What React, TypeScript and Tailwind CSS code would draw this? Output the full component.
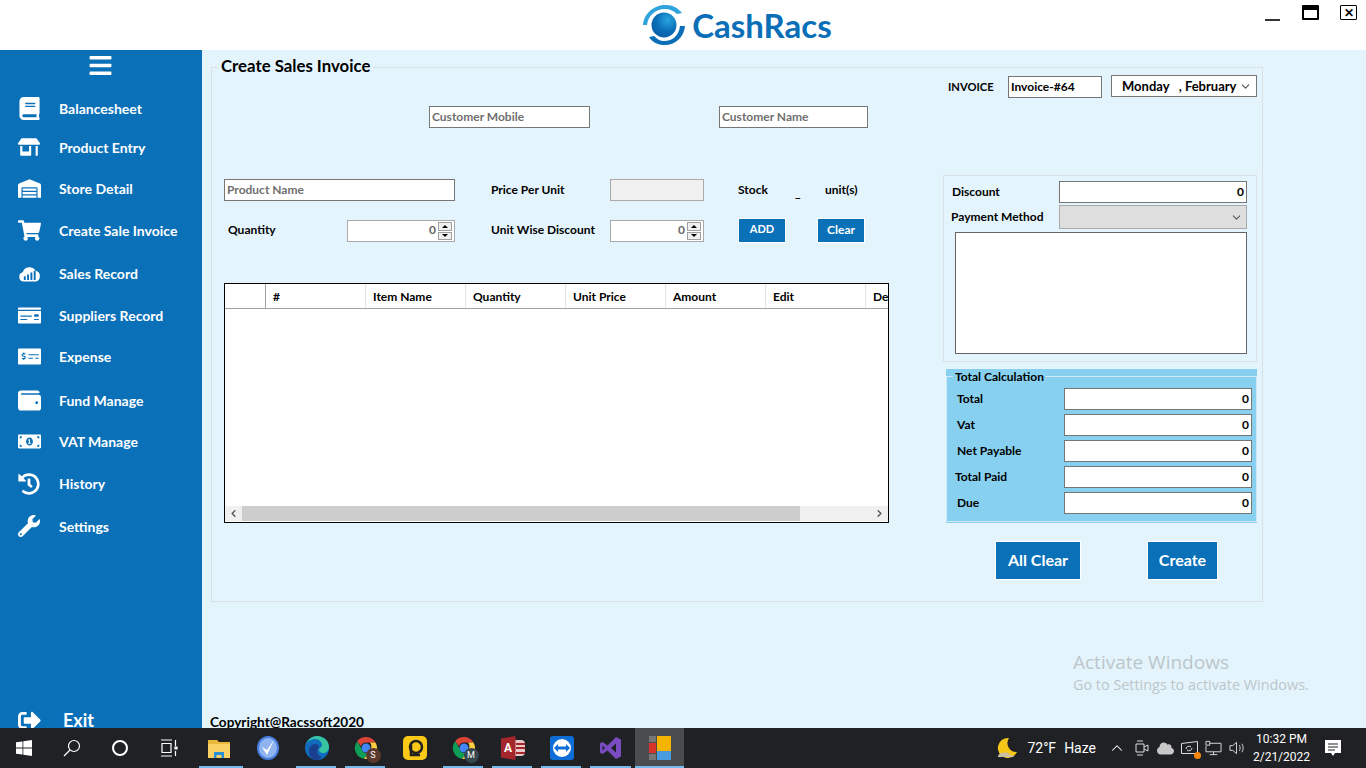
import React from 'react';
import {
  FaBars, FaBook, FaStoreAlt, FaWarehouse, FaShoppingCart, FaMoneyCheck, FaMoneyCheckAlt,
  FaWallet, FaMoneyBillAlt, FaHistory, FaWrench, FaSignOutAlt, FaCloud,
} from 'react-icons/fa';
import { ChevronUp, ChevronDown, ChevronLeft, ChevronRight } from 'lucide-react';

const SalesCloud = () => (
  <svg viewBox="0 0 24 18" className="w-[23px] h-[17px]">
    <path d="M6 17.5a5 5 0 0 1-1.2-9.8A7.5 7.5 0 0 1 18.5 6.2 5.8 5.8 0 0 1 18.5 17.5Z" fill="#fff" />
    <path d="M6 12h2v4H6zM9.500 10h2v6h-2zM13 8h2v8h-2zM16.500 6h2v10h-2z" fill="#0a70b8" />
  </svg>
);

const navItems = [
  { label: 'Balancesheet', icon: <FaBook size={23} />, h: 'h-[39px]' },
  { label: 'Product Entry', icon: <FaStoreAlt size={22} />, h: 'h-[40px] pb-[2px]' },
  { label: 'Store Detail', icon: <FaWarehouse size={23} />, h: 'h-[42px] pb-[2px]' },
  { label: 'Create Sale Invoice', icon: <FaShoppingCart size={23} />, h: 'h-[43px] pb-[2px]' },
  { label: 'Sales Record', icon: <SalesCloud />, h: 'h-[42px] pb-[2px]' },
  { label: 'Suppliers Record', icon: <FaMoneyCheck size={23} />, h: 'h-[41px]' },
  { label: 'Expense', icon: <FaMoneyCheckAlt size={23} />, h: 'h-[44px] pb-[4px]' },
  { label: 'Fund Manage', icon: <FaWallet size={23} />, h: 'h-[41px]' },
  { label: 'VAT Manage', icon: <FaMoneyBillAlt size={23} />, h: 'h-[42px] pb-[2px]' },
  { label: 'History', icon: <FaHistory size={22} />, h: 'h-[43px] pb-[2px]' },
  { label: 'Settings', icon: <FaWrench size={22} />, h: 'h-[42px] pb-[2px]' },
];

const columns = ['#', 'Item Name', 'Quantity', 'Unit Price', 'Amount', 'Edit', 'Delete'];

const totals = [
  { label: 'Total', cls: 'pl-[10px]' },
  { label: 'Vat', cls: 'pl-[10px]' },
  { label: 'Net Payable', cls: 'pl-[10px]' },
  { label: 'Total Paid', cls: 'pl-[8px]' },
  { label: 'Due', cls: 'pl-[10px]' },
];

const Spinner = () => (
  <div className="w-[14px] h-[18px] mr-px flex flex-col gap-px shrink-0">
    <div className="flex-1 border border-[#a0a0a0] bg-[#f0f0f0] flex items-center justify-center">
      <div className="w-0 h-0 border-x-[3px] border-x-transparent border-b-[3px] border-b-black" />
    </div>
    <div className="flex-1 border border-[#a0a0a0] bg-[#f0f0f0] flex items-center justify-center">
      <div className="w-0 h-0 border-x-[3px] border-x-transparent border-t-[3px] border-t-black" />
    </div>
  </div>
);

const NumberBox = ({ className }: { className: string }) => (
  <div className={`h-[22px] bg-white border border-[#a9a9a9] flex items-center justify-end pr-px gap-[2px] text-[12px] text-[#666] ${className}`}>
    <span className="pb-[2px]">0</span>
    <Spinner />
  </div>
);

const TextBox = ({ placeholder, className }: { placeholder: string; className: string }) => (
  <input
    readOnly
    placeholder={placeholder}
    className={`h-[22px] bg-white border border-[#767676] px-[2px] pb-[2px] text-[12px] font-bold outline-none placeholder:text-[#6f6f6f] ${className}`}
  />
);

const ZeroBox = ({ className }: { className: string }) => (
  <div className={`h-[22px] bg-white border border-[#767676] pr-[2px] flex items-center justify-end text-[12px] font-bold text-black ${className}`}>0</div>
);

const Logo = () => (
  <div className="flex items-center gap-[6px]">
    <svg viewBox="0 0 44 42" className="w-[44px] h-[42px]">
      <defs>
        <radialGradient id="ball" cx="65%" cy="30%" r="75%">
          <stop offset="0%" stopColor="#27a6df" />
          <stop offset="60%" stopColor="#0b6fb8" />
          <stop offset="100%" stopColor="#0a5fa6" />
        </radialGradient>
      </defs>
      <path d="M1 21C2 9 12 1 24 1c7 0 12 3 16 8l-5 1c-3-3-7-5-12-5C13 5 6 12 5 21Z" fill="#2ea3dc" />
      <path d="M43 22C42 34 32 42 21 41c-6-.5-11-3-14-8l5-1c3 3 6 5 10 5 9 0 15-6 16-15Z" fill="#0b6fb8" />
      <circle cx="22" cy="21" r="12.500" fill="url(#ball)" />
    </svg>
    <span className="text-[33px] leading-none font-bold text-[#0b6fb8]">CashRacs</span>
  </div>
);

const ChromeIcon = ({ letter, badge }: { letter: string; badge: string }) => (
  <div className="relative w-[24px] h-[24px]">
    <svg viewBox="0 0 24 24" className="w-[24px] h-[24px]">
      <path d="M12 1a11 11 0 0 1 9.500 5.500H12a5.500 5.500 0 0 0-5.200 3.700L3.200 5.200A11 11 0 0 1 12 1Z" fill="#db4437" />
      <path d="M3.200 5.200l4.500 7.800a5.500 5.500 0 0 0 5.800 4.300L10.300 22.900A11 11 0 0 1 3.200 5.200Z" fill="#0f9d58" />
      <path d="M21.500 6.500A11 11 0 0 1 10.300 22.900l4.700-8a5.500 5.500 0 0 0 .9-8.400Z" fill="#ffcd40" />
      <circle cx="12" cy="12" r="4.500" fill="#4285f4" />
    </svg>
    <span className={`absolute -right-[3px] -bottom-[3px] w-[15px] h-[15px] rounded-full text-[9px] leading-[15px] text-center text-white ${badge}`}>{letter}</span>
  </div>
);

const taskIcons = [
  {
    bar: 'w-[44px] left-[5px]',
    icon: (
      <svg viewBox="0 0 24 24" className="w-[24px] h-[24px]">
        <path d="M1 4h9l2 2h11v4H1Z" fill="#e8b73c" />
        <path d="M1 8h22v14H1Z" fill="#fad165" />
        <path d="M7 16h10v6h-2.500v-3h-5v3H7Z" fill="#2b8fd8" />
      </svg>
    ),
  },
  {
    bar: '',
    icon: (
      <svg viewBox="0 0 24 24" className="w-[24px] h-[24px]">
        <ellipse cx="12" cy="12" rx="11" ry="12" fill="#4a7fe0" />
        <ellipse cx="12" cy="12" rx="9" ry="10" fill="#8fb4ef" />
        <path d="M6 11l5 8 7-15-7 10Z" fill="#fff" />
      </svg>
    ),
  },
  {
    bar: 'w-[40px] left-[4px]',
    icon: (
      <svg viewBox="0 0 24 24" className="w-[24px] h-[24px]">
        <circle cx="12" cy="12" r="12" fill="#0f6cbd" />
        <path d="M12 0c7 0 12 5 12 11 0 4-3 6-6 6-2 0-4-1-4-3 0-3 3-2 3-5 0-3-3-6-7-6-4 0-8 2-10 7C2 4 7 0 12 0Z" fill="#36c5a0" />
        <path d="M13 13c-2 3 0 7 4 8-2 2-4 3-6 3-3 0-7-3-7-9 0-4 3-7 6-7 2 0 4 1 4 3Z" fill="#1a3f8f" />
      </svg>
    ),
  },
  { bar: 'w-[40px] left-[4px]', icon: <ChromeIcon letter="S" badge="bg-[#5b3a2e]" /> },
  {
    bar: '',
    icon: (
      <svg viewBox="0 0 24 24" className="w-[24px] h-[24px]">
        <rect x="0" y="0" width="24" height="24" rx="5" fill="#fbc916" />
        <circle cx="13" cy="11" r="6" fill="none" stroke="#222" strokeWidth="2.500" />
        <path d="M8 9v10h9" fill="none" stroke="#222" strokeWidth="2.500" />
      </svg>
    ),
  },
  { bar: 'w-[40px] left-[4px]', icon: <ChromeIcon letter="M" badge="bg-[#37474f]" /> },
  {
    bar: 'w-[40px] left-[4px]',
    icon: (
      <div className="relative w-[24px] h-[24px]">
        <div className="absolute right-0 top-[4px] w-[14px] h-[16px] rounded-[4px] bg-[#e8c8c8] flex flex-col justify-evenly pl-[5px]">
          <div className="h-[2px] bg-[#a4262c]" />
          <div className="h-[2px] bg-[#a4262c]" />
          <div className="h-[2px] bg-[#a4262c]" />
        </div>
        <div className="absolute left-0 top-0 w-[15px] h-[24px] bg-[#a4262c] text-white text-[12px] font-bold leading-[24px] text-center [clip-path:polygon(0_10%,100%_0,100%_100%,0_90%)]">A</div>
      </div>
    ),
  },
  {
    bar: 'w-[40px] left-[4px]',
    icon: (
      <svg viewBox="0 0 24 24" className="w-[24px] h-[24px]">
        <rect width="24" height="24" rx="3" fill="#0e6dd6" />
        <circle cx="12" cy="12" r="9" fill="#fff" />
        <path d="M4 12l4-4v2.500h8V8l4 4-4 4v-2.500H8V16Z" fill="#0e6dd6" />
      </svg>
    ),
  },
  {
    bar: 'w-[41px] left-[4px]',
    icon: (
      <svg viewBox="0 0 24 24" className="w-[24px] h-[24px]">
        <path fillRule="evenodd" d="M17 1l5 2.500v17L17 23l-8.500-8.500L3.500 18 1 16.500v-9L3.500 6l5 3.500ZM17 7.500L12 12l5 4.500ZM3.500 9.500v5L6 12Z" fill="#7a4cc2" />
      </svg>
    ),
  },
  {
    bar: 'w-[49px] left-0',
    active: true,
    icon: (
      <div className="flex gap-px">
        <div className="w-[7px] h-[24px] flex flex-col gap-px">
          <div className="h-[6px] bg-[#777]" />
          <div className="h-[10px] bg-[#d9342b]" />
          <div className="flex-1 bg-[#777]" />
        </div>
        <div className="w-[14px] h-[24px] flex flex-col">
          <div className="h-[15px] bg-[#f5b400]" />
          <div className="flex-1 bg-[#4a9ae0]" />
        </div>
      </div>
    ),
  },
];

const App = () => {
  return (
    <div className="relative w-[1366px] h-[768px] overflow-hidden bg-[#e4f4fc] text-black flex flex-col [font-family:Lato,sans-serif]">
      {/* Header */}
      <header className="relative h-[50px] bg-white flex items-center justify-center shrink-0 pl-[108px]">
        <Logo />
        <div className="absolute right-[9px] top-[5px] flex items-start gap-[22px]">
          <div className="w-[15px] h-[2px] bg-[#333] mt-[14px]" />
          <div className="w-[17px] h-[15px] rounded-[1px] border-2 border-t-[5px] border-black" />
          <div className="w-[17px] h-[15px] ml-[-1px] rounded-[1px] border border-black flex items-center justify-center text-[12px] leading-none font-bold">✕</div>
        </div>
      </header>

      <div className="flex flex-1 min-h-0">
        {/* Sidebar */}
        <aside className="w-[202px] h-full bg-[#0a70b8] text-white flex flex-col shrink-0">
          <div className="h-[39px] flex items-center justify-center pb-[8px] pr-px">
            <FaBars size={25} />
          </div>
          <nav>
            {navItems.map((item) => (
              <div key={item.label} className={`flex items-center ${item.h}`}>
                <span className="w-[59px] pl-[18px] shrink-0 flex items-center">{item.icon}</span>
                <span className="text-[14px] font-bold">{item.label}</span>
              </div>
            ))}
          </nav>
          <div className="mt-auto h-[16px] flex items-center">
            <span className="w-[63px] pl-[18px] shrink-0"><FaSignOutAlt size={23} /></span>
            <span className="text-[18px] font-bold">Exit</span>
          </div>
        </aside>

        {/* Main */}
        <main className="flex-1 relative pl-[9px] pt-[17px]">
          <div className="relative w-[1052px] h-[535px] border border-[#d9dfe3] flex">
            <span className="absolute -top-[11px] left-[6px] px-[3px] bg-[#e4f4fc] text-[16.800px] leading-[18px] font-bold">Create Sales Invoice</span>

            {/* Left column */}
            <div className="w-[731px] pl-[12px] pt-[38px] shrink-0">
              <div className="flex pl-[205px] gap-[129px]">
                <TextBox placeholder="Customer Mobile" className="w-[161px]" />
                <TextBox placeholder="Customer Name" className="w-[149px]" />
              </div>

              <div className="flex items-center h-[22px] mt-[51px] text-[12px] font-bold">
                <TextBox placeholder="Product Name" className="w-[231px]" />
                <span className="ml-[36px] w-[119px]">Price Per Unit</span>
                <div className="w-[94px] h-[22px] bg-[#f0f0f0] border border-[#a9a9a9]" />
                <span className="ml-[34px] w-[57px]">Stock</span>
                <span className="w-[30px] pt-[5px]">_</span>
                <span>unit(s)</span>
              </div>

              <div className="flex items-center h-[24px] mt-[18px] text-[12px] font-bold">
                <span className="pl-[4px] w-[123px] pb-[2px]">Quantity</span>
                <NumberBox className="w-[108px]" />
                <span className="ml-[36px] w-[119px] pb-[2px]">Unit Wise Discount</span>
                <NumberBox className="w-[94px]" />
                <button className="ml-[34px] -mt-[1px] w-[48px] h-[25px] pb-[2px] bg-[#0a70b8] border border-white text-white text-[11px] font-bold">ADD</button>
                <button className="ml-[31px] -mt-[1px] w-[48px] h-[25px] pb-[2px] bg-[#0a70b8] border border-white text-white text-[12px] font-bold">Clear</button>
              </div>

              {/* Table */}
              <div className="mt-[40px] w-[665px] h-[240px] border-[1.5px] border-black bg-white flex flex-col overflow-hidden">
                <div className="flex h-[25px] shrink-0 border-b border-[#a0a0a0] text-[12px] font-bold">
                  <div className="w-[41px] shrink-0 border-r border-[#a0a0a0]" />
                  {columns.map((c) => (
                    <div key={c} className="w-[100px] shrink-0 pl-[7px] pt-[2px] border-r border-[#e4e4e4] flex items-center">{c}</div>
                  ))}
                </div>
                <div className="flex-1" />
                <div className="flex h-[15px] mb-[1px] shrink-0 bg-[#f0f0f0] text-[#555]">
                  <div className="w-[17px] flex items-center justify-center"><ChevronLeft size={11} strokeWidth={3} /></div>
                  <div className="w-[558px] bg-[#cdcdcd]" />
                  <div className="flex-1" />
                  <div className="w-[17px] flex items-center justify-center"><ChevronRight size={11} strokeWidth={3} /></div>
                </div>
              </div>
            </div>

            {/* Right column */}
            <div className="w-[314px] pt-[7px] shrink-0">
              <div className="flex items-start h-[23px] text-[12px] font-bold">
                <span className="ml-[5px] w-[60px] mt-[4px] text-[11.200px]">INVOICE</span>
                <div className="w-[94px] h-[22px] mt-[1px] bg-white border border-[#767676] pl-[2px] flex items-center">Invoice-#64</div>
                <div className="ml-[9px] w-[146px] h-[22px] bg-white border border-[#767676] pl-[10px] pr-[4px] pt-px flex items-center justify-between text-[13px]">
                  <span>Monday &nbsp;&nbsp;, February</span>
                  <ChevronDown size={13} className="text-[#555]" />
                </div>
              </div>

              <div className="mt-[77px] h-[187px] border border-[#d9dfe3] pt-[5px] text-[12px] font-bold">
                <div className="flex items-center justify-between pl-[8px] pr-[9px]">
                  <span>Discount</span>
                  <ZeroBox className="w-[188px]" />
                </div>
                <div className="flex items-center justify-between pl-[7px] pr-[9px] mt-[2px]">
                  <span>Payment Method</span>
                  <div className="w-[188px] h-[24px] bg-[#dedede] border border-[#a9a9a9] flex items-center justify-end pr-[3px]">
                    <ChevronDown size={13} className="text-[#555]" />
                  </div>
                </div>
                <div className="ml-[11px] mt-[3px] w-[292px] h-[122px] bg-white border border-[#666]" />
              </div>

              <div className="mt-[7px] ml-[3px] w-[311px] h-[154px] bg-[#87d0f0] pt-[7px]">
                <div className="relative h-[146px] border border-[#cfe9f6] pt-[11px] text-[12px] font-bold">
                  <span className="absolute -top-[8px] left-[6px] px-[2px] bg-[#87d0f0] leading-[16px]">Total Calculation</span>
                  <div className="flex flex-col gap-[4px]">
                    {totals.map((t) => (
                      <div key={t.label} className={`flex items-center justify-between pr-[4px] ${t.cls}`}>
                        <span>{t.label}</span>
                        <ZeroBox className="w-[188px]" />
                      </div>
                    ))}
                  </div>
                </div>
              </div>

              <div className="flex mt-[18px] ml-[52px] gap-[66px] text-white text-[16px] font-bold">
                <button className="w-[86px] h-[39px] pb-[2px] bg-[#0a70b8] border border-white">All Clear</button>
                <button className="w-[71px] h-[39px] pb-[2px] bg-[#0a70b8] border border-white">Create</button>
              </div>
            </div>
          </div>

          <div className="absolute left-[8px] bottom-[-2px] text-[13.600px] font-bold leading-[16px]">Copyright@Racssoft2020</div>

          <div className="absolute left-[871px] top-[600px] text-[#bcc6cb] [font-family:'Open_Sans',sans-serif]">
            <div className="text-[19px] leading-[24px]">Activate Windows</div>
            <div className="text-[14.400px] leading-[21px]">Go to Settings to activate Windows.</div>
          </div>
        </main>
      </div>

      {/* Taskbar */}
      <footer className="relative z-10 h-[40px] bg-[#1f2124] text-white flex items-center shrink-0 [font-family:Roboto,sans-serif]">
        <div className="w-[48px] flex justify-center">
          <svg viewBox="0 0 16 16" className="w-[16px] h-[16px]">
            <path d="M0 2.300 6.500 1.400V7.600H0ZM7.300 1.300 16 0V7.600H7.300ZM0 8.400H6.500V14.600L0 13.700ZM7.300 8.400H16V16L7.300 14.700Z" fill="#fff" />
          </svg>
        </div>
        <div className="w-[48px] flex justify-center">
          <svg viewBox="0 0 18 18" className="w-[18px] h-[18px]" fill="none" stroke="#fff" strokeWidth="1.200">
            <circle cx="11" cy="7" r="5.500" />
            <path d="M7 11 1 17" />
          </svg>
        </div>
        <div className="w-[48px] flex justify-center">
          <div className="w-[16px] h-[16px] rounded-full border-2 border-white" />
        </div>
        <div className="w-[50px] flex justify-center">
          <svg viewBox="0 0 18 18" className="w-[18px] h-[18px]" fill="none" stroke="#fff" strokeWidth="1.200">
            <path d="M1 1h11M1 17h11M2 4.500h9v9H2ZM15.500 1v6M15.500 12v5" />
            <path d="M15 8h2v2h-2Z" fill="#fff" />
          </svg>
        </div>
        {taskIcons.map((t, i) => (
          <div key={i} className={`relative w-[49px] h-[40px] flex items-center justify-center ${t.active ? 'bg-[#4a4c4e]' : ''}`}>
            {t.icon}
            {t.bar && <div className={`absolute bottom-0 h-[2px] bg-[#76b9ed] ${t.bar}`} />}
          </div>
        ))}

        <div className="ml-auto flex items-center h-full text-[14px] mr-[17px]">
          <svg viewBox="0 0 24 24" className="w-[24px] h-[24px] mr-[8px]">
            <path d="M14 2a10 10 0 1 0 8 14A9 9 0 0 1 14 2Z" fill="#f5c518" />
            <path d="M3 20c1-3 4-4 6-3 2-1 5 0 6 2 1 0 3 0 4 2H3Z" fill="#cbbfa5" />
          </svg>
          <span>72°F</span>
          <span className="ml-[8px]">Haze</span>
          <ChevronUp size={18} strokeWidth={1.400} className="ml-[12px]" />
          <svg viewBox="0 0 16 16" className="ml-[8px] w-[16px] h-[16px]" fill="none" stroke="#ddd" strokeWidth="1">
            <path d="M3 1h6M3 15h6M2 4h8v8H2ZM10 7l4-2v6l-4-2" />
          </svg>
          <FaCloud size={17} className="ml-[7px] text-[#c8c8c8]" />
          <div className="relative ml-[7px] w-[17px] h-[15px]">
            <svg viewBox="0 0 17 15" className="w-[17px] h-[15px]" fill="none" stroke="#ddd" strokeWidth="1">
              <path d="M.5 2.500 16.500.5v12H.5ZM5 8a3 3 0 0 1 5-2M11 7a3 3 0 0 1-5 2" />
            </svg>
            <span className="absolute -right-[3px] -bottom-[3px] w-[7px] h-[7px] rounded-full bg-[#f7860e]" />
          </div>
          <svg viewBox="0 0 18 16" className="ml-[7px] w-[17px] h-[16px]" fill="none" stroke="#ddd" strokeWidth="1">
            <path d="M5 3h12v9H1V6M9 12v3M5 15h8M1 1h4v4H1Z" />
          </svg>
          <svg viewBox="0 0 18 16" className="ml-[7px] w-[17px] h-[16px]" fill="none" stroke="#ddd" strokeWidth="1">
            <path d="M1 5.500h3l4-3.500v12l-4-3.500H1ZM11 5c1 1.500 1 4.500 0 6M13.500 3.500c2 2.500 2 6.500 0 9" />
          </svg>
          <div className="w-[71px] text-center text-[12px] leading-[18px]">
            <div>10:32 PM</div>
            <div>2/21/2022</div>
          </div>
          <div className="w-[32px] flex justify-center">
            <svg viewBox="0 0 18 18" className="w-[18px] h-[18px]">
              <path fillRule="evenodd" d="M1 1h16v13h-6l-2 3-2-3H1ZM4 4.500v1h10v-1ZM4 7.500v1h10v-1ZM4 10.500v1h7v-1Z" fill="#fff" />
            </svg>
          </div>
        </div>
      </footer>
    </div>
  );
};

export default App;
